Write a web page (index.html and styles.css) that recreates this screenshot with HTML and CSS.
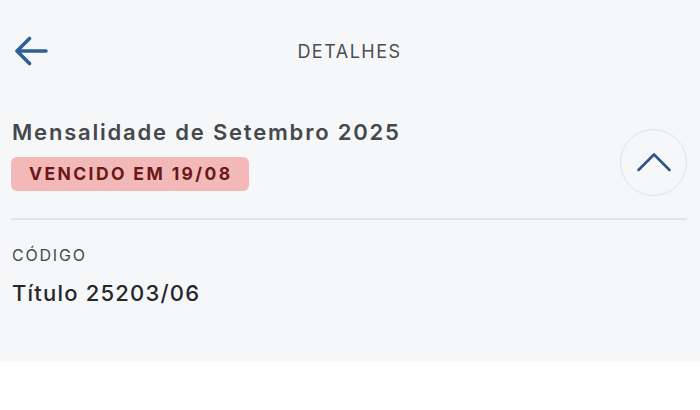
FILE: index.html
```html
<!DOCTYPE html>
<html lang="pt">
<head>
<meta charset="utf-8">
<link rel="stylesheet" href="styles.css">
</head>
<body>
<div class="screen">
  <header class="topbar">
    <button class="back" aria-label="Voltar">
      <svg width="36" height="30" viewBox="0 0 36 30"><path d="M33 15H4M16.5 2.5L4 15l12.5 12.5" fill="none" stroke="#2d5f9b" stroke-width="3.6" stroke-linecap="round" stroke-linejoin="round"/></svg>
    </button>
    <h1 class="topbar-title">DETALHES</h1>
    <span class="spacer"></span>
  </header>
  <section class="summary">
    <div class="summary-text">
      <h2 class="bill-title">Mensalidade de Setembro 2025</h2>
      <span class="badge">VENCIDO EM 19/08</span>
    </div>
    <button class="collapse" aria-label="Recolher">
      <svg width="36" height="22" viewBox="0 0 36 22"><path d="M2.5 19L18 3.5 33.5 19" fill="none" stroke="#2f5682" stroke-width="2.6" stroke-linecap="round" stroke-linejoin="round"/></svg>
    </button>
  </section>
  <hr class="divider">
  <section class="field">
    <div class="field-label">CÓDIGO</div>
    <div class="field-value">Título 25203/06</div>
  </section>
</div>
</body>
</html>
```
FILE: styles.css
```css
* { box-sizing: border-box; }
html, body { margin: 0; padding: 0; background: #ffffff; }
body { font-family: "Inter", "Noto Sans", sans-serif; }
.screen {
  background: #f6f7f9;
  height: 362px;
  padding: 0 12px 0 11px;
}
.topbar {
  height: 104px;
  display: flex;
  align-items: flex-start;
}
.back {
  border: 0;
  background: none;
  padding: 0;
  margin: 36px 0 0 2px;
  width: 40px;
  height: 30px;
  display: flex;
  align-items: center;
}
.topbar-title {
  flex: 1;
  text-align: center;
  margin: 41px 0 0 0;
  font-size: 18px;
  font-weight: 400;
  letter-spacing: 1.5px;
  color: #4b4e53;
  line-height: 22px;
}
.spacer { width: 42px; }
.summary {
  display: flex;
  align-items: flex-start;
  justify-content: space-between;
  padding-top: 13px;
}
.summary-text {
  display: flex;
  flex-direction: column;
  align-items: flex-start;
}
.bill-title {
  margin: 0 0 0 1px;
  font-size: 22px;
  font-weight: 600;
  color: #45484d;
  letter-spacing: 1.8px;
  line-height: 30px;
}
.badge {
  display: block;
  margin-top: 10px;
  padding: 0 16px 0 18px;
  height: 34px;
  line-height: 34px;
  background: #f3b8b8;
  color: #6a1717;
  border-radius: 6px;
  font-size: 17.5px;
  font-weight: 700;
  letter-spacing: 2.4px;
}
.collapse {
  width: 67px;
  height: 67px;
  border-radius: 50%;
  border: 1.5px solid #e0e2e5;
  background: transparent;
  display: flex;
  align-items: center;
  justify-content: center;
  padding: 0 0 2px 0;
  margin: 12px 1px 0 0;
}
.divider {
  border: 0;
  height: 2px;
  background: #e2e3e6;
  margin: 22px 1px 0 0;
}
.field { padding-top: 25px; padding-left: 1px; }
.field-label {
  font-size: 16px;
  letter-spacing: 1.8px;
  color: #46494e;
  line-height: 20px;
}
.field-value {
  margin-top: 14px;
  font-size: 22px;
  font-weight: 500;
  color: #25272b;
  letter-spacing: 1.2px;
  line-height: 28px;
}
```
